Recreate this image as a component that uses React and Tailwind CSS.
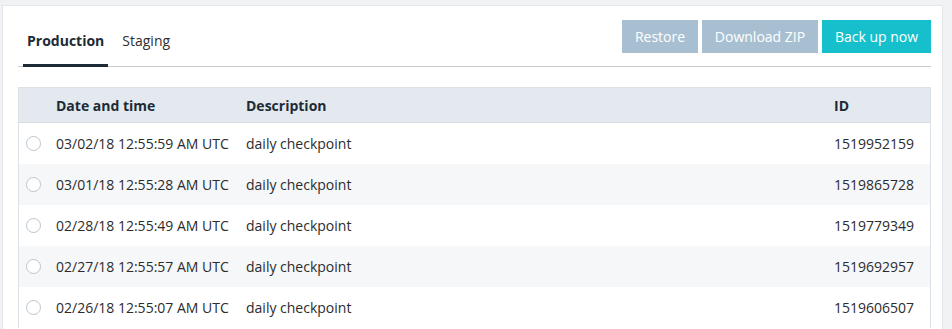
import React, { useState } from 'react';

const backups = [
  { date: '03/02/18 12:55:59 AM UTC', desc: 'daily checkpoint', id: '1519952159' },
  { date: '03/01/18 12:55:28 AM UTC', desc: 'daily checkpoint', id: '1519865728' },
  { date: '02/28/18 12:55:49 AM UTC', desc: 'daily checkpoint', id: '1519779349' },
  { date: '02/27/18 12:55:57 AM UTC', desc: 'daily checkpoint', id: '1519692957' },
  { date: '02/26/18 12:55:07 AM UTC', desc: 'daily checkpoint', id: '1519606507' },
];

const Tab = ({ label, active, onClick }) => (
  <button
    onClick={onClick}
    className={`px-[4px] pb-[13px] text-[14px] leading-[20px] border-b-[3px] ${
      active ? 'font-bold text-[#1c2b36] border-[#1c2b36]' : 'text-[#2e2e2e] border-transparent'
    }`}
  >
    {label}
  </button>
);

export default function App() {
  const [tab, setTab] = useState('Production');
  const [selected, setSelected] = useState(null);

  return (
    <div className="h-[329px] bg-[#f1f2f4] pt-[5px] pl-[2px] overflow-hidden" style={{ fontFamily: '"Open Sans", sans-serif' }}>
      <div className="w-[941px] h-[360px] bg-white border border-[#e2e5e9] pl-[15px] pr-[11px]">
        <div className="flex justify-between items-start pt-[14px] border-b border-[#c8cdd2] h-[61px]">
          <div className="flex gap-[10px] ml-[5px] self-end mb-[-1px]">
            <Tab label="Production" active={tab === 'Production'} onClick={() => setTab('Production')} />
            <Tab label="Staging" active={tab === 'Staging'} onClick={() => setTab('Staging')} />
          </div>
          <div className="flex gap-[4px]">
            <button className="h-[33px] w-[76px] bg-[#a8bfd2] text-white text-[14px]">Restore</button>
            <button className="h-[33px] w-[116px] bg-[#a8bfd2] text-white text-[14px]">Download ZIP</button>
            <button className="h-[33px] w-[109px] bg-[#16bfcc] text-white text-[14px]">Back up now</button>
          </div>
        </div>

        <div className="mt-[20px] border-x border-t border-[#dce1e6] text-[14px] text-[#2c2c2c]">
          <div className="grid grid-cols-[37px_190px_588px_1fr] items-center h-[35px] bg-[#e4e9f0] font-bold text-[#1c2b36] border-b border-[#d6dce3]">
            <div />
            <div>Date and time</div>
            <div>Description</div>
            <div>ID</div>
          </div>
          {backups.map((b, i) => (
            <div
              key={b.id}
              onClick={() => setSelected(b.id)}
              className={`grid grid-cols-[37px_190px_588px_1fr] items-center h-[41px] cursor-pointer ${
                i % 2 === 1 ? 'bg-[#f5f7f9]' : 'bg-white'
              }`}
            >
              <div className="pl-[7px] flex items-center">
                <span className="w-[15px] h-[15px] rounded-full border border-[#bfc4ca] bg-white flex items-center justify-center">
                  {selected === b.id && <span className="w-[7px] h-[7px] rounded-full bg-[#16bfcc]" />}
                </span>
              </div>
              <div>{b.date}</div>
              <div>{b.desc}</div>
              <div>{b.id}</div>
            </div>
          ))}
        </div>
      </div>
    </div>
  );
}
